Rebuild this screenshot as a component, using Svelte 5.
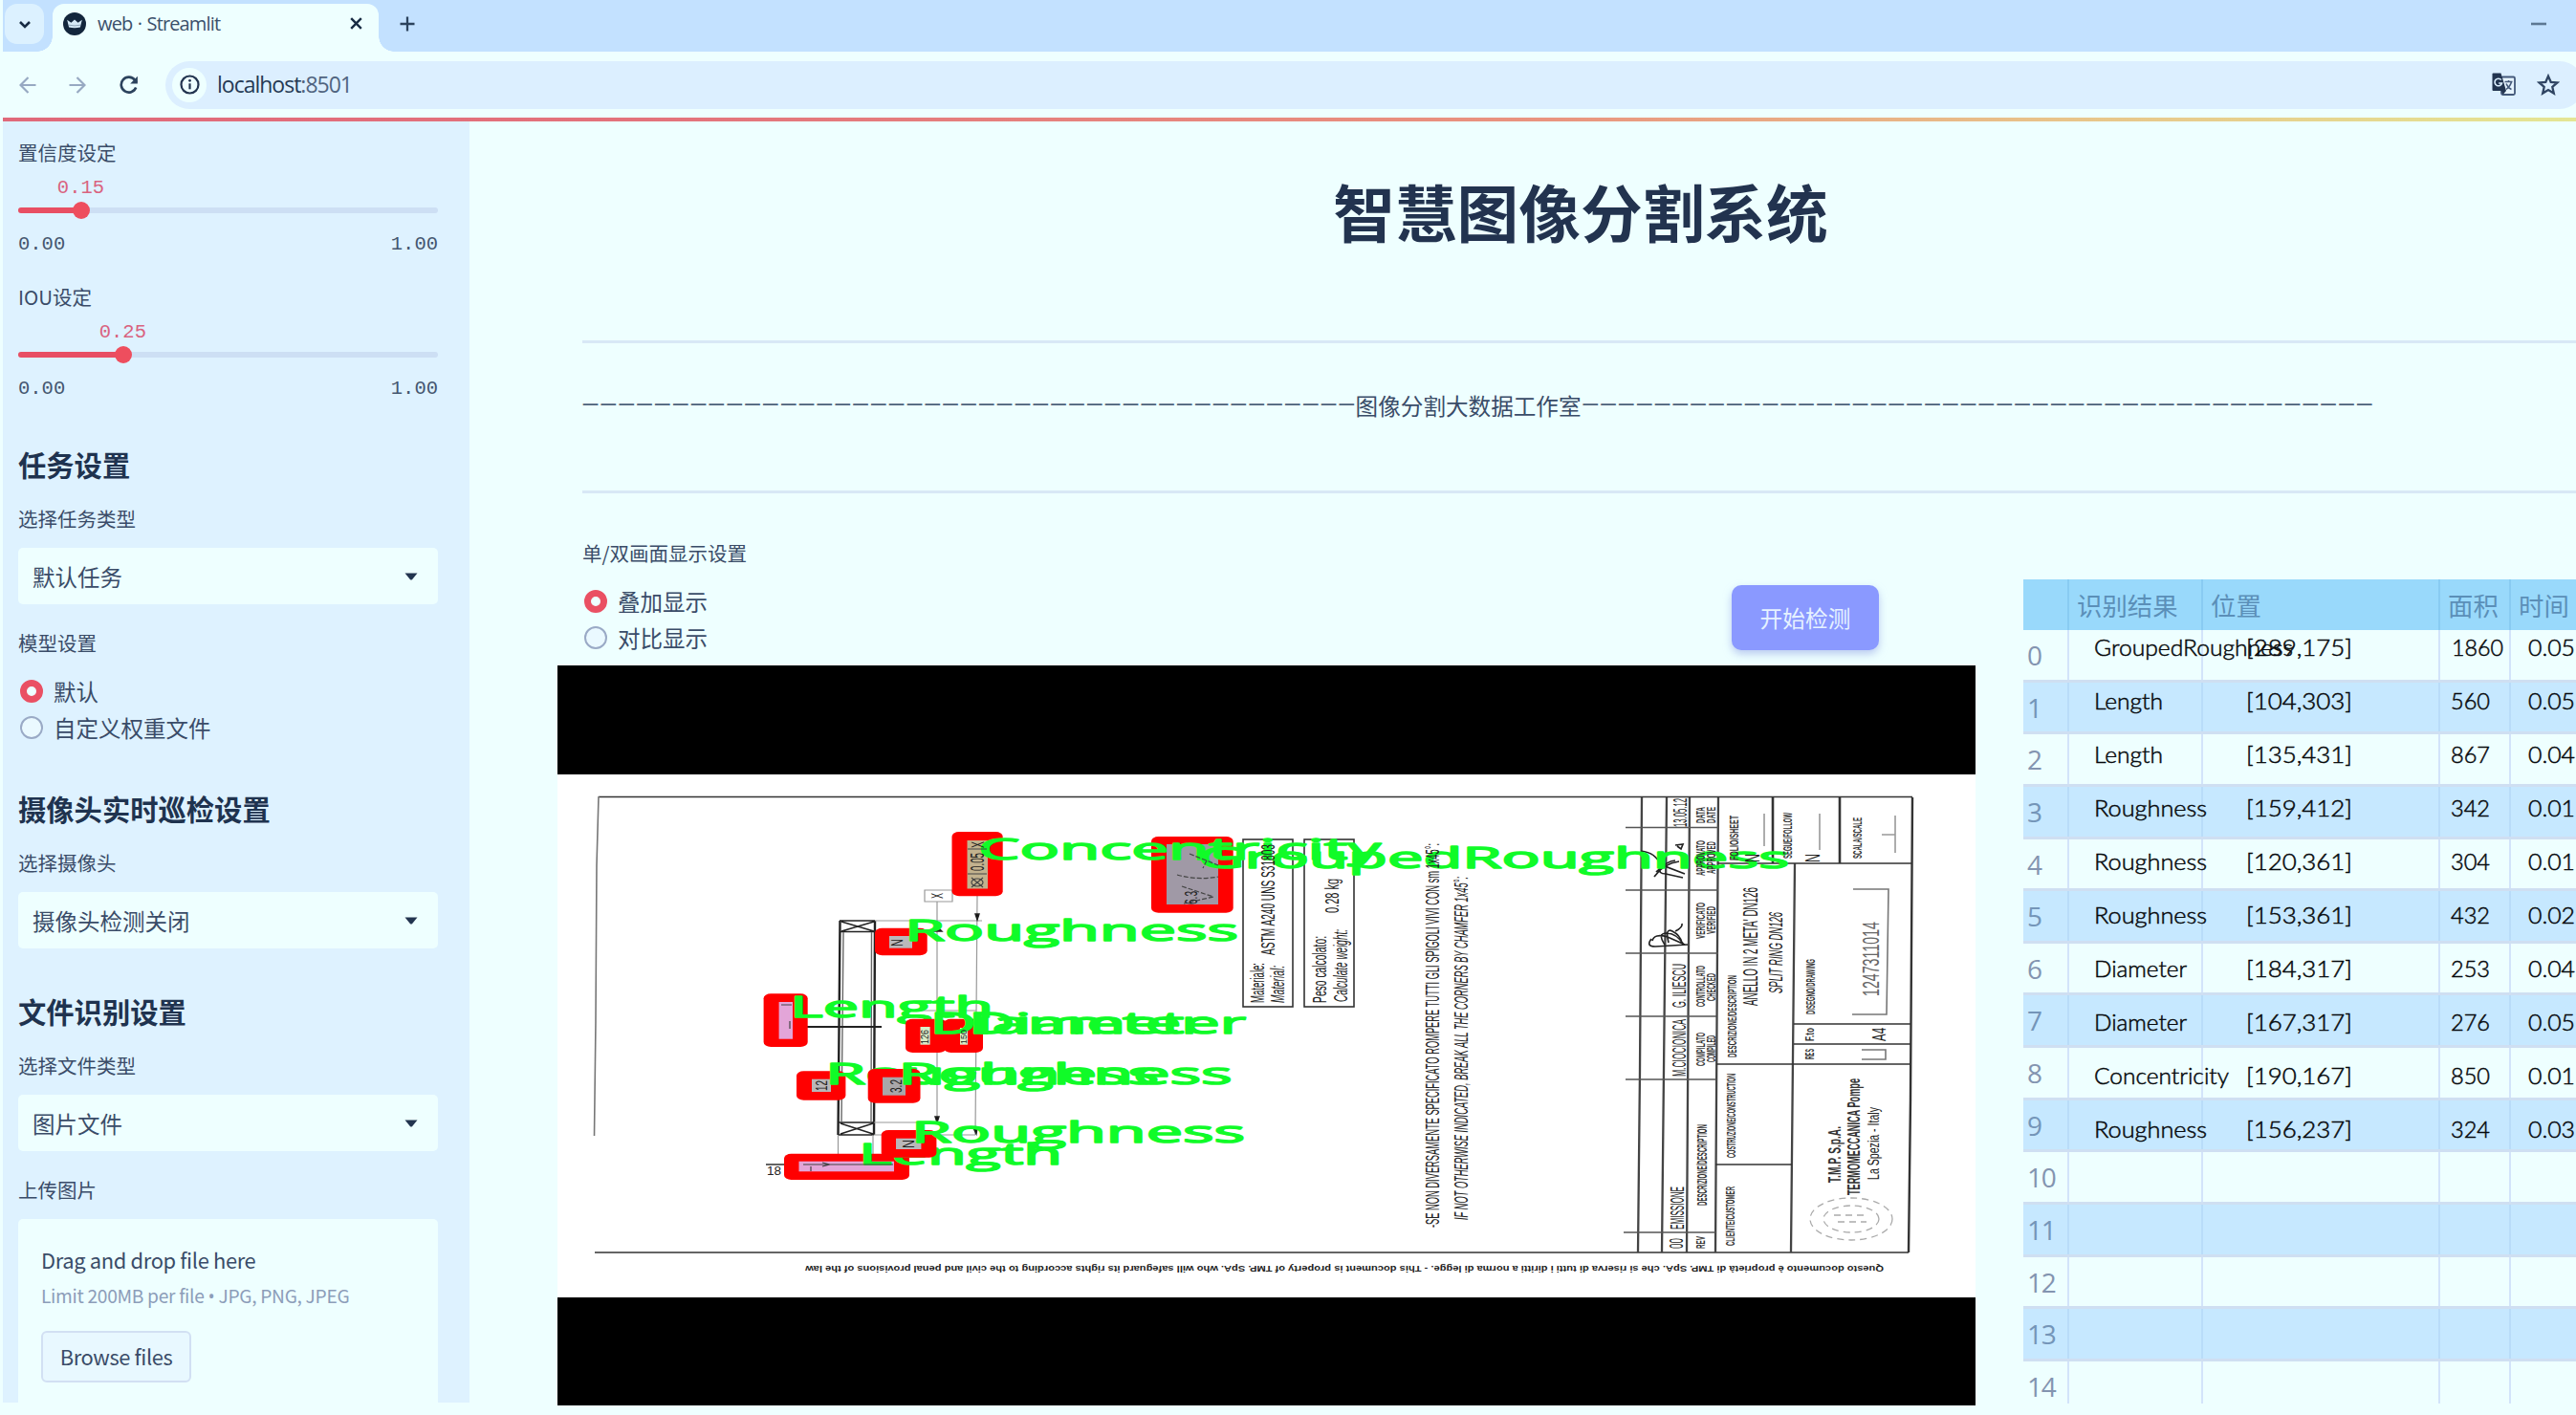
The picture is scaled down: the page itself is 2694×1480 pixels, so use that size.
<script>
  const sliders = [
    { label: '置信度设定', value: 0.15 },
    { label: 'IOU设定', value: 0.25 },
  ];

  const detections = [
    { name: 'GroupedRoughness', w: 206, pos: '[289,175]', area: '1860', time: '0.05' },
    { name: 'Length', w: 70, pos: '[104,303]', area: '560', time: '0.05' },
    { name: 'Length', w: 70, pos: '[135,431]', area: '867', time: '0.04' },
    { name: 'Roughness', w: 116, pos: '[159,412]', area: '342', time: '0.01' },
    { name: 'Roughness', w: 116, pos: '[120,361]', area: '304', time: '0.01' },
    { name: 'Roughness', w: 116, pos: '[153,361]', area: '432', time: '0.02' },
    { name: 'Diameter', w: 95, pos: '[184,317]', area: '253', time: '0.04' },
    { name: 'Diameter', w: 95, pos: '[167,317]', area: '276', time: '0.05' },
    { name: 'Concentricity', w: 139, pos: '[190,167]', area: '850', time: '0.01' },
    { name: 'Roughness', w: 116, pos: '[156,237]', area: '324', time: '0.03' },
  ];
  const rows = Array.from({ length: 15 }, (_, i) => i);

  // outer box [x1,y1,x2,y2], inner box [x1,y1,x2,y2], mask colour, caption [x, baseline, width]
  const marks = [
    { o: [1204, 875, 1289.7, 954.7], i: [1220, 883, 1274, 946], c: '#a099a6', t: 'GroupedRoughness', p: [1258, 909, 611] },
    { o: [798.6, 1039.3, 844.7, 1095], i: [814.6, 1048, 829, 1086.7], c: '#e3a5d8', t: 'Length', p: [831, 1065, 206] },
    { o: [820, 1206.7, 951, 1234], i: [835.5, 1214.7, 935, 1225.3], c: '#e3a5d8', t: 'Length', p: [903, 1219, 206] },
    { o: [921.7, 1182, 979.4, 1210.7], i: [937, 1190.7, 963.4, 1202], c: '#b9b7b9', t: 'Roughness', p: [958, 1196, 342] },
    { o: [833, 1120.3, 884.4, 1150.7], i: [849, 1128.7, 869, 1142], c: '#b9b7b9', t: 'Roughness', p: [868, 1134.5, 342] },
    { o: [907.7, 1118, 962.5, 1153.7], i: [923, 1126.7, 947, 1145.7], c: '#a9a7a9', t: 'Roughness', p: [944.5, 1134.5, 342] },
    { o: [987, 1065.7, 1028, 1101], i: [1004, 1075, 1012, 1092.7], c: '#d9edc8', t: 'Diameter', p: [1018, 1081.7, 283] },
    { o: [947, 1065.7, 989.6, 1101], i: [962.5, 1074, 972.6, 1092.7], c: '#d9edc8', t: 'Diameter', p: [977.5, 1081.7, 283] },
    { o: [995.5, 870, 1048.7, 937.3], i: [1011.5, 879, 1033, 929.5], c: '#c2b28e', t: 'Concentricity', p: [1028, 899.5, 414] },
    { o: [915, 970.7, 969.7, 999.3], i: [930, 979, 954, 991.7], c: '#bab8ba', t: 'Roughness', p: [951, 984.5, 342] },
  ];

  // lettering turned a quarter to the left: text, baseline x, start y, length, size, class
  const notes = [
    ['Materiale:', 1322, 1049, 42, 20, ''],
    ['ASTM A240 UNS S31803', 1333, 999, 116, 20, ''],
    ['Material:', 1343, 1049, 39, 20, 'it'],
    ['Peso calcolato:', 1387, 1049, 70, 20, ''],
    ['0.28 kg', 1400, 955, 36, 20, ''],
    ['Calculate weight:', 1409, 1048, 76, 20, 'it'],
    ['-SE NON DIVERSAMENTE SPECIFICATO ROMPERE TUTTI GLI SPIGOLI VIVI CON sm 1x45°:', 1505, 1284, 402, 21, ''],
    ['IF NOT OTHERWISE INDICATED, BREAK ALL THE CORNERS BY CHAMFER 1x45°:', 1535, 1276, 359, 21, 'it'],
    ['13.05.12', 1764, 865, 30, 21, ''],
    ['DATA', 1783, 861, 17, 13, 'b'],
    ['DATE', 1794, 861, 17, 13, 'b'],
    ['APPROVATO', 1783, 916, 37, 13, 'b'],
    ['APPROVED', 1794, 914, 34, 13, 'b'],
    ['VERIFICATO', 1783, 982, 38, 13, 'b'],
    ['VERIFIED', 1794, 977, 29, 13, 'b'],
    ['CONTROLLATO', 1783, 1053, 43, 13, 'b'],
    ['CHECKED', 1794, 1047, 29, 13, 'b'],
    ['COMPILATO', 1783, 1115, 35, 13, 'b'],
    ['COMPILED', 1794, 1111, 28, 13, 'b'],
    ['G. ILIESCU', 1763, 1054, 46, 21, ''],
    ['M.CIOCIONICA', 1763, 1126, 60, 21, ''],
    ['EMISSIONE', 1761, 1286, 45, 21, ''],
    ['00', 1760, 1306, 11, 21, ''],
    ['DESCRIZIONE/DESCRIPTION', 1785, 1261, 85, 14, 'b'],
    ['REV', 1783, 1306, 13, 13, 'b'],
    ['CLIENTE/CUSTOMER', 1814, 1303, 62, 13, 'b'],
    ['COSTRUZIONE/CONSTRUCTION', 1815, 1211, 88, 13, 'b'],
    ['DESCRIZIONE/DESCRIPTION', 1816, 1106, 86, 13, 'b'],
    ["ANELLO IN 2 META' DN126", 1838, 1052, 124, 22, ''],
    ['SPLIT RING DN126', 1864, 1039, 85, 21, 'it'],
    ['FOLIO/SHEET', 1818, 900, 47, 13, 'b'],
    ['SEGUE/FOLLOW', 1874, 898, 48, 13, 'b'],
    ['SCALA/SCALE', 1947, 898, 43, 13, 'b'],
    ['N', 1903, 902, 9, 22, ''],
    ['N', 1840, 902, 9, 22, ''],
    ['DISEGNO/DRAWING', 1898, 1061, 58, 13, 'b'],
    ['1247311014', 1965, 1042, 78, 24, 'thin'],
    ['RES', 1897, 1108, 11, 13, 'b'],
    ['F.to', 1897, 1089, 14, 13, 'b'],
    ['A4', 1972, 1089, 14, 21, ''],
    ['T.M.P. S.p.A.', 1925, 1237, 59, 19, 'b'],
    ['TERMOMECCANICA Pompe', 1945, 1250, 122, 19, 'b'],
    ['La Spezia - Italy', 1965, 1234, 76, 17, ''],
    ['0.05', 1029, 911, 19, 20, ''],
    ['X', 1029, 887, 7, 18, ''],
    ['6.3', 1252, 946, 14, 18, ''],
    ['X', 986, 940, 6, 17, ''],
    ['3.2', 943, 1143, 14, 17, ''],
    ['N', 944, 990, 8, 17, ''],
    ['12', 865, 1141, 11, 17, ''],
    ['N', 956, 1201, 9, 17, ''],
    ['150', 1011, 1092, 15, 9, ''],
    ['126', 971, 1092, 15, 11, ''],
  ];
</script>

{#snippet dashes(n)}
  {#each Array(n) as _}<span class="dash">—</span>{/each}
{/snippet}

{#snippet select(text)}
  <div class="select">
    <span>{text}</span>
    <svg width="14" height="8" viewBox="0 0 14 8"><path d="M0.5 0.5h13L8 7.2q-1 .8-2 0z" fill="#22344f" /></svg>
  </div>
{/snippet}

<div class="page">
  <header class="tabs">
    <div class="menu">
      <svg width="14" height="9" viewBox="0 0 14 9"><path d="M2 2l5 5 5-5" fill="none" stroke="#172b43" stroke-width="2.6" /></svg>
    </div>
    <div class="tab">
      <svg class="fav" width="24" height="24" viewBox="0 0 24 24">
        <circle cx="12" cy="12" r="12" fill="#13263c" />
        <path d="M4.2 7.8l4.2 3 3.600-3.300 3.600 3.300 4.200-3-1.900 7.700q-5.900 1.400-11.800 0z" fill="#d5e9f6" />
        <path d="M6 13.2q6 1.500 12 0" stroke="#8fa5b9" fill="none" />
      </svg>
      <span class="tabname">web · Streamlit</span>
      <svg class="close" width="13" height="13" viewBox="0 0 13 13"><path d="M1.200 1.200l10.600 10.600M11.800 1.200L1.200 11.800" stroke="#172b43" stroke-width="2.400" /></svg>
    </div>
    <svg class="plus" width="16" height="16" viewBox="0 0 16 16"><path d="M8 .5v15M.5 8h15" stroke="#2c435d" stroke-width="2.300" /></svg>
    <svg class="min" width="16" height="4" viewBox="0 0 16 4"><path d="M0 2h16" stroke="#5d7893" stroke-width="2.600" /></svg>
  </header>

  <nav class="bar">
    <svg class="back" width="18" height="18" viewBox="0 0 18 18"><path d="M17.500 9H2M9.500 1L1.500 9l8 8" fill="none" stroke="#97a9c2" stroke-width="2.200" /></svg>
    <svg class="fwd" width="18" height="18" viewBox="0 0 18 18"><path d="M.5 9H16M8.500 1l8 8-8 8" fill="none" stroke="#97a9c2" stroke-width="2.200" /></svg>
    <svg class="reload" width="20" height="20" viewBox="0 0 20 20"><path d="M17.200 12.500A8 8 0 1 1 16 4.600l1.800 2.600" fill="none" stroke="#2c435d" stroke-width="2.600" /><path d="M18.900.8v7.700h-7.700z" fill="#2c435d" /></svg>
    <div class="url">
      <div class="info">
        <svg width="21" height="21" viewBox="0 0 21 21"><circle cx="10.500" cy="10.500" r="9" fill="none" stroke="#22344f" stroke-width="2.200" /><path d="M10.500 9.300v6" stroke="#22344f" stroke-width="2.200" /><circle cx="10.500" cy="6.300" r="1.400" fill="#22344f" /></svg>
      </div>
      <span class="host"><b>localhost</b>:8501</span>
      <svg class="tr" width="25" height="25" viewBox="0 0 25 25">
        <rect x="10" y="4.500" width="14" height="18.500" rx="1.500" fill="#e6f4ff" stroke="#44597a" stroke-width="1.800" />
        <path d="M13.500 9.500h8M17.500 8v1.500M20.500 9.500q-1 4.500-5.500 8M15 11.500q2 4.500 5.500 6" fill="none" stroke="#44597a" stroke-width="1.500" />
        <path d="M1.500.5h8L15 19H1.500Q.5 19 .5 18V1.500Q.5.5 1.500.5z" fill="#22344f" />
        <path d="M9.800 7.600A3.800 3.800 0 1 0 10.500 11H7.200" fill="none" stroke="#dcefff" stroke-width="1.600" />
        <path d="M10 19h5l-3.500 4z" fill="#22344f" />
      </svg>
      <svg class="star" width="24" height="24" viewBox="0 0 24 24"><path d="M12 2.600l2.700 6.200 6.700.6-5.100 4.500 1.500 6.600-5.800-3.500-5.800 3.500 1.500-6.600L2.600 9.400l6.700-.6z" fill="none" stroke="#2f4462" stroke-width="2.300" /></svg>
    </div>
  </nav>

  <div class="rainbow"></div>

  <div class="body">
    <aside>
      {#each sliders as s}
        <div class="slider">
          <div class="label">{s.label}</div>
          <div class="value"><span style="margin-left: {s.value * 100}%">{s.value}</span></div>
          <div class="track"><i style="width: {s.value * 100}%"></i><b></b></div>
          <div class="ends"><span>0.00</span><span>1.00</span></div>
        </div>
      {/each}

      <h2>任务设置</h2>
      <div class="label first">选择任务类型</div>
      {@render select('默认任务')}
      <div class="label next">模型设置</div>
      <div class="radios">
        <div class="radio on"><i></i>默认</div>
        <div class="radio"><i></i>自定义权重文件</div>
      </div>

      <h2>摄像头实时巡检设置</h2>
      <div class="label first">选择摄像头</div>
      {@render select('摄像头检测关闭')}

      <h2>文件识别设置</h2>
      <div class="label first">选择文件类型</div>
      {@render select('图片文件')}
      <div class="label next">上传图片</div>
      <div class="upload">
        <p class="drag">Drag and drop file here</p>
        <p class="limit">Limit 200MB per file <span class="dot">•</span> JPG, PNG, JPEG</p>
        <button class="browse">Browse files</button>
      </div>
    </aside>

    <main>
      <h1>智慧图像分割系统</h1>
      <hr class="one" />
      <div class="studio">{@render dashes(43)}<span class="name">图像分割大数据工作室</span>{@render dashes(44)}</div>
      <hr class="two" />

      <div class="work">
        <section class="left">
          <div class="controls">
            <div>
              <div class="label">单/双画面显示设置</div>
              <div class="radios">
                <div class="radio on"><i></i>叠加显示</div>
                <div class="radio"><i></i>对比显示</div>
              </div>
            </div>
            <button class="start">开始检测</button>
          </div>

          <svg class="canvas" width="1483" height="774" viewBox="583 696 1483 774">
            <rect x="583" y="696" width="1483" height="774" fill="#000" />
            <rect x="583" y="810" width="1483" height="547" fill="#fff" />

            <g fill="none" stroke="#333" stroke-width="1.600">
              <path d="M626 833.500H2000M622 1310H1996" />
              <path d="M626 833L624 905 623 1068 621.500 1188" stroke="#777" />
              <path d="M2000 834L1998 1150 1996 1310" stroke-width="2.400" />
              <path d="M1717 834L1715 1120 1713 1310M1743 834L1738 1310M1767 834L1764 1310M1797 834L1794 1310M1877 903L1873 1310" stroke-width="2.300" stroke="#444" />
              <path d="M1854 834v69M1924 834v69" stroke-width="2.600" />
              <path d="M1700 865.500h97M1700 931h97M1700 997h97M1700 1063h95M1700 1129h95M1698 1289h96" stroke="#555" />
              <path d="M1797 903h203M1876 1071h122M1876 1092h122M1795 1113h203M1794 1218h80" />
              <path d="M1845 851v34M1903 851v38M1982 853v39M1968 873h14" stroke="#999" />
              <path d="M1937 1061H1973L1975 930H1938M1947 1098h25v10h-25" stroke="#777" />
              <rect x="1300" y="878" width="52" height="175" />
              <rect x="1364" y="878" width="52" height="175" />
            </g>

            <g fill="none" stroke="#222" stroke-width="1.400">
              <path d="M878 963h37M878 974.500h37M876 1174h38M876 1187h38M880 964l34 10M914 964l-34 10M879 1175l34 11M913 1175l-34 11" />
              <path d="M878.500 963L876.500 1187M915 963L914 1187" stroke-width="2.400" />
              <path d="M882 975L880 1174M911.500 975L911 1174" stroke="#666" />
              <path d="M822 1074h100" stroke-width="2" />
              <path d="M915 963h112M914 1187h106M914 1174h66M980 943v231M1022 937L1020 1187M876.500 1187v32M913 1187v32M967 931h29v12h-29zM961 1057h60" stroke="#999" stroke-width="1.200" />
              <path d="M1020 956l2 6 2-6zM1018 1180l3 6 1-6zM976 974l4-5 5 5zM978 1168l2 6 2-6z" fill="#111" />
              <path d="M801 1218h19" />
            </g>
            <text x="802" y="1229" textLength="15" lengthAdjust="spacingAndGlyphs" class="note" font-size="12">18</text>

            <g fill="none" stroke="#222" stroke-width="1.700">
              <path d="M1716 890q16 2 20 14l26 10M1730 917q10 -14 26 -16M1732 912q12 -12 20 -12M1736 908q-2 6 6 6l18 4M1752 884l8 -1 -2 5 -4 -3" />
              <path d="M1727 982q-6 8 4 8l34 -2M1728 984q2 -8 16 -4l18 8M1741 988q-8 -12 2 -12t18 12M1745 986q-4 -16 4 -12t10 12M1752 974q8 -4 7 -8" />
              <g stroke="#aaa" stroke-dasharray="7 5" stroke-width="1.300">
                <ellipse cx="1936" cy="1275" rx="43" ry="22" />
                <ellipse cx="1936" cy="1275" rx="29" ry="14" />
                <path d="M1918 1271h34M1922 1278h30" />
              </g>
            </g>

            <g transform="translate(1970 1323.500) rotate(180)">
              <text x="0" y="0" textLength="1128" lengthAdjust="spacingAndGlyphs" class="note foot">Questo documento è proprietà di TMP. SpA. che si riserva di tutti i diritti a norma di legge. - This document is property of TMP. SpA. who will safeguard its rights according to the civil and penal provisions of the law</text>
            </g>

            {#each marks as m}
              <rect x={m.o[0]} y={m.o[1]} width={m.o[2] - m.o[0]} height={m.o[3] - m.o[1]} rx="7.500" ry="5" fill="#f00" />
              <rect x={m.i[0]} y={m.i[1]} width={m.i[2] - m.i[0]} height={m.i[3] - m.i[1]} fill={m.c} />
              <text class="caption" x={m.p[0] - 5} y={m.p[1] - 1} textLength={m.p[2] + 7} lengthAdjust="spacingAndGlyphs">{m.t}</text>
            {/each}

            <g fill="none" stroke="#444" stroke-width="1.200">
              <path d="M1244 893l30 12M1231 915q22 6 43 2M1236 927l33 11 -31 7M1262 900l-4 8" stroke-dasharray="5 2" />
              <path d="M1012 888h20M1012 914h20" />
              <ellipse cx="1022" cy="923" rx="6" ry="4" />
              <path d="M1016 918l12 10M1028 918l-12 10" />
              <path d="M817 1051h11M840 1218h94M860 1216l8 2 -8 2M826 1068v8M848 1220v5" />
            </g>
            {#each notes as n}
              <g transform="translate({n[1]} {n[2]}) rotate(-90)">
                <text class="note {n[5]}" font-size={n[4]} textLength={n[3]} lengthAdjust="spacingAndGlyphs">{n[0]}</text>
              </g>
            {/each}
          </svg>
        </section>

        <section class="table">
          <div class="row head"><span class="c0"></span><span class="c1">识别结果</span><span class="c2">位置</span><span class="c3">面积</span><span class="c4">时间</span></div>
          {#each rows as r}
            <div class="row" class:odd={r % 2 === 1}>
              <span class="c0">{r}</span><span class="c1"></span><span class="c2"></span><span class="c3"></span><span class="c4"></span>
            </div>
          {/each}
          <svg class="results" width="578" height="862" viewBox="2116 606 578 862">
            {#each detections as d, i}
              <g transform="translate(0 {685.5 + i * 56.04})">
                <text x="2190" textLength={d.w + 2} lengthAdjust="spacingAndGlyphs">{d.name}</text>
                <text x="2349" textLength="111" lengthAdjust="spacingAndGlyphs">{d.pos}</text>
                <text x={d.area.length > 3 ? 2564 : 2563} textLength={d.area.length > 3 ? 54 : 41} lengthAdjust="spacingAndGlyphs">{d.area}</text>
                <text x="2644" textLength="49" lengthAdjust="spacingAndGlyphs">{d.time}</text>
              </g>
            {/each}
          </svg>
        </section>
      </div>
    </main>
  </div>
</div>

<style>
  :global(body) { background: #eeffff; }
  * { box-sizing: border-box; }
  .page {
    width: 2694px; height: 1480px; overflow: hidden;
    display: flex; flex-direction: column;
    background: #eeffff; color: #3a4c68;
    font-family: "Noto Sans CJK SC", sans-serif;
  }
  svg { display: block; flex: none; }
  h1, h2, p, hr { margin: 0; border: 0; }

  .tabs { height: 54px; flex: none; display: flex; align-items: center; background: #c3e1ff; margin-left: 3px; }
  .menu {
    width: 41px; height: 42px; margin: -4px 0 0 2px; border-radius: 13px; background: #dcf1ff;
    display: flex; align-items: center; justify-content: center;
  }
  .tab {
    position: relative; align-self: flex-end; width: 341px; height: 50px; margin-left: 9px; padding: 0 17px 9px 11px;
    display: flex; align-items: center; background: #eeffff; border-radius: 12px 12px 0 0;
  }
  .tab::before, .tab::after { content: ""; position: absolute; bottom: 0; width: 16px; height: 16px; }
  .tab::before { left: -16px; background: radial-gradient(circle at 0 0, transparent 15.5px, #eeffff 16px); }
  .tab::after { right: -16px; background: radial-gradient(circle at 100% 0, transparent 15.5px, #eeffff 16px); }
  .tabname { margin-left: 12px; font: 20px/30px "Open Sans", sans-serif; letter-spacing: -0.85px; word-spacing: 1px; color: #3b506b; white-space: nowrap; }
  .close { margin-left: auto; }
  .plus { margin: -4px 0 0 22px; }
  .min { margin: -5px 31px 0 auto; }

  .bar { height: 69px; flex: none; display: flex; align-items: center; padding-left: 20px; }
  .fwd { margin-left: 34px; }
  .reload { margin-left: 35px; }
  .url { width: 2529px; height: 50px; flex: none; margin-left: 28px; border-radius: 25px; background: #dcefff; display: flex; align-items: center; }
  .info { width: 36px; height: 36px; margin-left: 7px; border-radius: 50%; background: #eeffff; display: flex; align-items: center; justify-content: center; }
  .host { margin-left: 11px; margin-top: -2px; font: 23px/36px "Open Sans", sans-serif; letter-spacing: -1px; color: #50647f; }
  .host b { font-weight: 400; color: #263a55; }
  .tr { margin-left: auto; }
  .star { margin: 0 25px 0 22px; }

  .rainbow { height: 4px; flex: none; margin-left: 3px; background: linear-gradient(90deg, #e0697a 0%, #e3737c 25%, #e9947f 60%, #e8c48a 80%, #e4e694 100%); }

  .body { display: flex; flex: 1; min-height: 0; padding-left: 3px; }
  aside { width: 488px; height: 1340px; flex: none; overflow: hidden; padding: 19px 33px 0 16px; background: #def2ff; }
  .label { height: 30px; font-size: 20.5px; line-height: 27px; white-space: nowrap; }

  .slider { height: 120px; margin-bottom: 31px; font-family: "Liberation Mono", monospace; }
  .slider .label { font-family: "Noto Sans CJK SC", sans-serif; }
  .value { height: 24px; margin-top: 7px; font-size: 20.5px; line-height: 27px; color: #d9637f; }
  .value span { display: inline-block; width: 50px; transform: translateX(-50%); }
  .track { display: flex; align-items: center; height: 18px; margin-top: 4px; position: relative; }
  .track::before { content: ""; position: absolute; left: 0; right: 0; top: 6px; height: 6px; border-radius: 3px; background: #cddff4; }
  .track i { height: 6px; border-radius: 3px; background: #e84f63; position: relative; }
  .track b { width: 18px; height: 18px; margin-left: -9px; border-radius: 50%; background: #ee4e5e; position: relative; }
  .ends { height: 24px; margin-top: 13px; display: flex; justify-content: space-between; font-size: 20.5px; line-height: 27px; color: #44566f; }

  h2 { height: 40px; font-size: 29.300px; line-height: 40px; font-weight: 700; color: #1f334f; margin-top: 45px; white-space: nowrap; }
  .slider + h2 { margin-top: 48px; }
  .first { margin-top: 24px; }
  .next { margin-top: 27px; }
  .select {
    height: 59px; margin-top: 14px; padding: 0 21px 0 15px; border-radius: 5px; background: #eeffff;
    display: flex; align-items: center; justify-content: space-between; font-size: 23.500px;
  }
  .radios { margin-top: 15px; padding-left: 2px; }
  .radio { display: flex; align-items: center; height: 38px; font-size: 23.500px; }
  .radio i { width: 24px; height: 24px; margin-right: 11px; border-radius: 50%; border: 2px solid #9aaac6; background: #eaf9ff; }
  .radio.on i { border: 7.500px solid #ea5063; background: #eeffff; }
  .upload { height: 220px; margin-top: 14px; padding: 25px 0 0 24px; border-radius: 5px; background: #eeffff; }
  .drag { font-size: 21.900px; line-height: 36px; letter-spacing: -0.35px; }
  .limit { margin-top: 3px; font-size: 19.200px; line-height: 32px; letter-spacing: -0.3px; color: #8c9db9; white-space: nowrap; }
  .dot { font-family: "Open Sans", sans-serif; }
  .browse {
    width: 157px; height: 54px; margin-top: 20px; padding: 0; border: 2px solid #d2e0f3; border-radius: 6px; background: #e8f8ff;
    font: 21.900px/30px "Noto Sans CJK SC", sans-serif; letter-spacing: -0.4px; color: #3a4c68;
  }

  main { flex: 1; min-width: 0; padding-top: 53px; display: flex; flex-direction: column; }
  h1 { height: 80px; padding-left: 121px; text-align: center; font-size: 64.700px; line-height: 80px; font-weight: 700; color: #22334f; }
  hr { height: 3px; flex: none; margin-left: 118px; background: #d8e8f6; }
  .one { margin-top: 96px; }
  .two { margin-top: 69px; }
  .studio { height: 40px; margin: 45px 0 0 117px; display: flex; align-items: center; font-size: 23.600px; }
  .dash { width: 18.840px; flex: none; display: flex; justify-content: center; font: 24px/42px Roboto, sans-serif; color: #4d617a; }
  .name { flex: none; width: 236px; white-space: nowrap; line-height: 38px; }

  .work { display: flex; align-items: flex-start; }
  .left { width: 1483px; margin-left: 92px; flex: none; }
  .controls { height: 180px; padding: 49px 101px 0 26px; display: flex; justify-content: space-between; }
  .start {
    width: 154px; height: 68px; margin-top: 47px; padding: 0; border: 0; border-radius: 10px; background: #8a99ff; color: #e6f2ff;
    font: 23.700px/30px "Noto Sans CJK SC", sans-serif; box-shadow: 0 4px 9px #9fb0e8aa;
  }

  .table { position: relative; width: 578px; height: 862px; flex: none; margin: 90px 0 0 50px; overflow: hidden; }
  .row { display: flex; height: 54.630px; border-bottom: 3px solid #cfdff2; }
  .row:last-of-type { border-bottom: 0; height: 44px; }
  .row.odd { background: #c6e8ff; }
  .row.head { height: 53px; border: 0; background: #99d9fb; font-size: 26.400px; line-height: 54px; color: #5b8fb8; }
  .row span { height: 100%; flex: none; border-right: 2px solid #d3e4fa; white-space: nowrap; }
  .row.odd span { border-color: #b9dcf9; }
  .row.head span { border-color: #89cbf2; padding-left: 8px; }
  .row .c0 { width: 48px; padding-left: 4px; font: 28px/52px "Open Sans", sans-serif; letter-spacing: -1.200px; color: #8394b0; }
  .row.odd .c0 { color: #7495b8; }
  .row .c1 { width: 140px; }
  .row .c2 { width: 248px; }
  .row .c3 { width: 74px; }
  .row .c4 { width: 68px; border: 0; }
  .results { position: absolute; left: 0; top: 0; font: 300 23px Lato, sans-serif; fill: #06090c; stroke: #06090c; stroke-width: 0.500px; }

  .note { font-family: "Liberation Sans", sans-serif; fill: #222; }
  .it { font-style: italic; }
  .b { font-weight: 700; fill: #333; }
  .thin { fill: #666; }
  .foot { font-size: 9.500px; font-weight: 700; fill: #222; }
  .caption { font: 31px "Open Sans", sans-serif; fill: #10fb28; stroke: #10fb28; stroke-width: 1.500px; stroke-linejoin: round; }
</style>
